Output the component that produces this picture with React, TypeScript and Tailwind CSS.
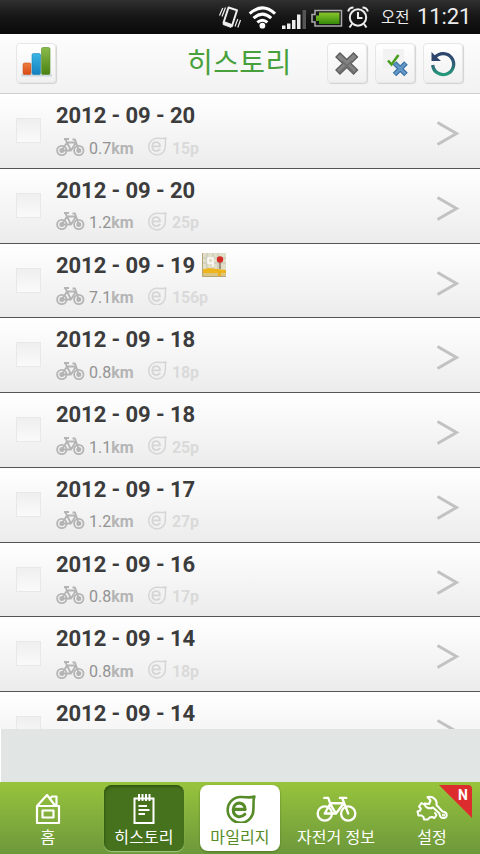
import type { ReactNode } from "react";

const entries = [
  { date: "2012 - 09 - 20", km: "0.7", points: 15 },
  { date: "2012 - 09 - 20", km: "1.2", points: 25 },
  { date: "2012 - 09 - 19", km: "7.1", points: 156, map: true },
  { date: "2012 - 09 - 18", km: "0.8", points: 18 },
  { date: "2012 - 09 - 18", km: "1.1", points: 25 },
  { date: "2012 - 09 - 17", km: "1.2", points: 27 },
  { date: "2012 - 09 - 16", km: "0.8", points: 17 },
  { date: "2012 - 09 - 14", km: "0.8", points: 18 },
  { date: "2012 - 09 - 14" },
];

function StatusBar() {
  return (
    <header className="flex h-[34px] shrink-0 items-center bg-linear-to-b from-[#303030] via-[#161616] via-50% to-[#0a0a0a] pl-[218px] text-[#ececec]">
      <svg width="24" height="34" viewBox="0 0 24 34" fill="none" stroke="#eee">
        <path d="M10.500 7.500 19 10.200 14 26 5.500 22.800Z" strokeWidth="2" strokeLinejoin="round" />
        <path d="M6 21.500 14 24.500 13 27.500 5 24.500Z" fill="#eee" strokeWidth=".8" />
        <path d="M4.800 8 1.500 15.500M7.500 7.500 4 16.500M22.500 20 19.800 27.500M19.800 19 17 26.500" strokeWidth="1.200" />
      </svg>
      <svg className="ml-[6px]" width="28" height="34" viewBox="0 0 28 34" fill="none" stroke="#fff" strokeWidth="3">
        <path d="M1.700 13.700Q14.500 2 27 13.700M5.500 18.200Q14.500 10 23.200 18.200M9.300 22.400Q14.500 18 19.400 22.400" />
        <circle cx="14.400" cy="25.700" r="2.900" fill="#fff" stroke="none" />
      </svg>
      <svg className="ml-[5px]" width="27" height="34" viewBox="0 0 27 34" fill="#eee">
        <path d="M1 25.500h3.500V29H1zM6 23.500h3.500V29H6zM11 20h3.500v9H11zM16 14.500h3.500V29H16z" />
        <path d="M21.500 10H25v19h-3.500z" fill="#555" />
      </svg>
      <svg className="ml-[3px]" width="32" height="34" viewBox="0 0 32 34">
        <defs>
          <linearGradient id="charge" x2="0" y2="1">
            <stop stopColor="#8ac62d" />
            <stop offset="1" stopColor="#348a08" />
          </linearGradient>
        </defs>
        <path d="M4 10.500H30.500V26H4V22H1V14.500H4Z" fill="#171717" stroke="#aaa" strokeWidth="1.500" />
        <path d="M8 12.500H28.500V24H8V21H5V15.500H8Z" fill="url(#charge)" />
      </svg>
      <svg className="ml-1" width="22" height="34" viewBox="0 0 22 34" fill="none" stroke="#eee" strokeWidth="2">
        <circle cx="11" cy="17.500" r="8.200" />
        <path d="M11 12v6h4.500M1.200 11.500Q2 7.500 6.500 7.500M15.500 7.500Q20 7.500 20.800 11.500M5 24l-2.500 3.500M17 24l2.500 3.500" />
      </svg>
      <span className="ml-[12px] w-[36px] pt-0.5 text-[15.500px] leading-[32px] whitespace-nowrap">오전</span>
      <span className="pb-px text-[22px] leading-[32px] tracking-[-0.1px] whitespace-nowrap">11:21</span>
    </header>
  );
}

function ToolButton({ label, children }: { label: string; children: ReactNode }) {
  return (
    <button
      aria-label={label}
      className="flex size-10 shrink-0 items-center justify-center rounded-[4px] border border-[#e6e6e6] bg-linear-to-b from-white to-[#f0f0f0] shadow-[1px_1px_1px_#d2d2d2]"
    >
      {children}
    </button>
  );
}

function TitleBar() {
  return (
    <div className="flex h-[60px] shrink-0 items-center border-b border-[#ccd1cc] bg-linear-to-b from-[#fdfdfd] to-[#f1f2f1] pb-0.5 pl-4">
      <ToolButton label="chart">
        <svg width="40" height="40" viewBox="0 0 40 40" className="shrink-0">
          <defs>
            <linearGradient id="orange" x2="0" y2="1"><stop stopColor="#ee7d40" /><stop offset="1" stopColor="#d94a12" /></linearGradient>
            <linearGradient id="blue" x2="0" y2="1"><stop stopColor="#39b5e4" /><stop offset="1" stopColor="#1680bf" /></linearGradient>
            <linearGradient id="green" x2="0" y2="1"><stop stopColor="#8abb4b" /><stop offset="1" stopColor="#4b8212" /></linearGradient>
          </defs>
          <rect x="5" y="31" width="31" height="2.500" rx="1" fill="#ccd6de" />
          <rect x="7" y="20" width="8" height="11.500" rx="1.500" fill="url(#orange)" stroke="#c95220" strokeWidth=".6" />
          <rect x="16" y="10.500" width="8.500" height="21" rx="1.500" fill="url(#blue)" stroke="#1785b7" strokeWidth=".6" />
          <rect x="25.500" y="4.500" width="8.500" height="27" rx="1.500" fill="url(#green)" stroke="#568d26" strokeWidth=".6" />
        </svg>
      </ToolButton>
      <h1 className="ml-[131px] w-[140px] pt-0.5 text-[28px] leading-[54px] font-normal tracking-[0.4px] whitespace-nowrap text-[#48a03c]">히스토리</h1>
      <div className="flex gap-2">
        <ToolButton label="delete">
          <svg width="40" height="40" viewBox="0 0 40 40" className="shrink-0">
            <path d="M10.500 11.500 29 29.500M29 11.500 10.500 29.500" stroke="#5b5b5b" strokeWidth="7" />
            <path d="M11.500 12.500 28 28.500M28 12.500 11.500 28.500" stroke="#858585" strokeWidth="4.500" />
            <path d="M15 18 26.500 29M25 18 13 29" stroke="#707070" strokeWidth="2" />
          </svg>
        </ToolButton>
        <ToolButton label="select">
          <svg width="40" height="40" viewBox="0 0 40 40" fill="none" className="shrink-0">
            <path d="M8 6h21v20H8z" fill="#f2f2f2" />
            <path d="M13 17.500 16.500 21.500 23.500 12" stroke="#4b9d20" strokeWidth="2.600" />
            <path d="M19.500 20 31 31.500M31 20 19.500 31.500" stroke="#356fa6" strokeWidth="5" />
            <path d="M20 20.500 30.500 31M30.500 20.500 20 31" stroke="#6397c5" strokeWidth="2.500" />
          </svg>
        </ToolButton>
        <ToolButton label="refresh">
          <svg width="40" height="40" viewBox="0 0 40 40" fill="none" className="shrink-0">
            <defs>
              <linearGradient id="turn" x2="0" y2="1"><stop stopColor="#2c456c" /><stop offset=".45" stopColor="#315975" /><stop offset="1" stopColor="#25997c" /></linearGradient>
            </defs>
            <path d="M12 14.500A10.500 10.500 0 1 1 9.700 22" stroke="url(#turn)" strokeWidth="3.300" />
            <path d="M8.500 9V18H18L14 14.500Z" fill="#2d456c" />
          </svg>
        </ToolButton>
      </div>
    </div>
  );
}

function Bike({ className = "", width = 30, stroke = 2 }: { className?: string; width?: number; stroke?: number }) {
  return (
    <svg className={className} width={width} height={width * 0.68} viewBox="0 0 42 28.560" fill="none" stroke="currentColor" strokeWidth={stroke} strokeLinejoin="round" strokeLinecap="round">
      <circle cx="9" cy="19" r="7.300" />
      <circle cx="33" cy="19" r="7.300" />
      <path d="M9 19 14.500 9 20.500 19H9M20.500 19 28.500 8.500H14.500L12.500 3H8.500M33 19 27 3.500M24.500 3H31" />
    </svg>
  );
}

// same bicycle with filled hubs, for the small size in the list
function RowBike() {
  return (
    <svg className="-mt-1 text-[#b4b4b4]" width="29" height="20" viewBox="0 0 29 20" fill="none" stroke="currentColor" strokeWidth="1.800" strokeLinejoin="round">
      <circle cx="5.800" cy="13.500" r="4.700" />
      <circle cx="22.800" cy="13.500" r="4.700" />
      <circle cx="5.800" cy="13.500" r="1.600" fill="currentColor" />
      <circle cx="22.800" cy="13.500" r="1.600" fill="currentColor" />
      <path d="M5.800 13.500 11 5.500 15 13.500H5.800M15 13.500 20 5.500H11L9.500 2.500M8 2H13M22.800 13.500 19 2.500H16.500" />
    </svg>
  );
}

function Leaf({ size, stroke = 2.4 }: { size: number; stroke?: number }) {
  return (
    <svg width={size} height={size * 0.93} viewBox="0 0 30 28" fill="none" stroke="currentColor" strokeWidth={stroke} strokeLinecap="round" strokeLinejoin="round">
      <path d="M28.500 1.500C27 5 28 10 27.500 14A12.500 12.500 0 1 1 14 2C20 1.500 24 3.500 28.500 1.500Z" />
      <path d="M8.500 14H19.500C19.500 5.800 8 5.800 8 14.200C8 22 15.500 22.500 19.200 18.700" strokeWidth={stroke * 1.2} />
    </svg>
  );
}

function MapIcon() {
  return (
    <svg className="ml-[7px]" width="24" height="24" viewBox="0 0 24 24" fill="none">
      <path d="M0 0h24v24H0z" fill="#e2dfc8" />
      <path d="M0 5h24M0 10h24M5 0v16M11 0v16M16 0v16" stroke="#c3c3b7" />
      <path d="M6 5h5v5H6zM11 5v9" stroke="#fff" strokeWidth="1.500" />
      <path d="M0 16.500 7 15 24 17v3H0z" fill="#eeb51e" />
      <path d="M0 20h24v4H0z" fill="#dcc580" />
      <path d="M16 17h3v7h-3z" fill="#e9b21d" />
      <path d="M18 8v8" stroke="#8a7867" strokeWidth="1.500" />
      <circle cx="18" cy="6.500" r="3.200" fill="#d52c25" />
      <path d="M.5 0v23.500H24" stroke="#b5a577" />
    </svg>
  );
}

function HistoryRow({ entry }: { entry: (typeof entries)[number] }) {
  return (
    <li className="flex h-[74.75px] shrink-0 border-b border-[#555] bg-linear-to-b from-white to-[#ececec] pl-4">
      <span className="mt-6 size-[25px] shrink-0 border border-[#e8e8e8] bg-linear-to-b from-[#efefef] to-[#fafafa]" />
      <div className="ml-[15px] flex-1 pt-2">
        <div className="flex h-[27px] items-center text-[22px] font-bold tracking-[-0.08px] whitespace-nowrap text-[#3c3c3c]">
          {entry.date}
          {entry.map && <MapIcon />}
        </div>
        {entry.km && (
          <div className="mt-[7px] flex h-6 items-center pt-px text-[16px] leading-6">
            <RowBike />
            <span className="ml-1 w-[58px] whitespace-nowrap text-[#929292]">
              {entry.km}<b className="text-[#b5b5b5]">km</b>
            </span>
            <span className="-mt-1 text-[#d5d5d5]"><Leaf size={20} stroke={2.2} /></span>
            <b className="ml-[5px] tracking-[-0.2px] text-[#dadada]">{entry.points}p</b>
          </div>
        )}
      </div>
      <svg className="mt-[27px] mr-5" width="24" height="26" viewBox="0 0 24 26" fill="none">
        <path d="M1.500 1.500 20.500 12.500 1.500 23.500" stroke="#c2c2c2" strokeWidth="3" />
      </svg>
    </li>
  );
}

function HomeIcon() {
  return (
    <svg width="26" height="32" viewBox="0 0 26 32" fill="none" stroke="#fff" strokeWidth="2.200">
      <path d="M2 13h22v17H2zM2 13 12 2 20 12.500M15.500 5 17 3.500H21.500V12M7.500 17.500h11v7h-11z" strokeLinejoin="round" />
    </svg>
  );
}

function NotesIcon() {
  return (
    <svg width="24" height="32" viewBox="0 0 24 32" fill="none" stroke="#fff" strokeWidth="2">
      <path d="M2.500 5.500h19v24.500h-19zM7 1v7M10.500 1v7M14 1v7M17.500 1v7M6.500 13H15M6.500 17h11M6.500 21H13" />
    </svg>
  );
}

function SettingsIcon() {
  return (
    <svg width="32" height="28" viewBox="0 0 32 28" fill="none" stroke="#fff" strokeWidth="2" strokeLinejoin="round" strokeLinecap="round">
      <path d="M8 9.500 5.500 8 3 11.500 4.800 13.500 4.200 15.500 1.500 16.500 2.500 20.500 5.500 20.500 7.500 22 8 24.500 12 24.500 13.500 22.500 16 22 18.500 23 20.500 20 19 18" />
      <path d="M11.500 2 14.500 5.500 13 9 8.500 8.500C9 12.500 13 14.500 17 12.500L23.500 18.500C23.500 21 25 23.500 28 23C31.500 22.500 31.500 18 28.500 17L26.500 16.500 20.500 10C21.500 5.500 18 1 11.500 2Z" />
      <circle cx="27.500" cy="20" r=".6" />
    </svg>
  );
}

const tabs = [
  { label: "홈", icon: <HomeIcon /> },
  { label: "히스토리", icon: <NotesIcon />, style: "bg-[#46711d] shadow-[inset_1px_2px_2px_#315a12,0_1px_1px_#a5c781]" },
  { label: "마일리지", icon: <Leaf size={31} stroke={2.5} />, style: "bg-white text-[#568b28] shadow-[0_1px_2px_#527823]" },
  { label: "자전거 정보", icon: <Bike width={41} stroke={2.4} /> },
  { label: "설정", icon: <SettingsIcon />, isNew: true },
];

function TabBar() {
  return (
    <nav className="grid h-[72px] shrink-0 grid-cols-5 bg-linear-to-b from-[#98c43c] to-[#6d983b] text-white">
      {tabs.map(({ label, icon, style = "", isNew }) => (
        <div key={label} className="relative flex justify-center pt-[3px]">
          <div className={`flex h-[66px] w-20 flex-col items-center rounded-[8px] ${style}`}>
            <div className="mt-[7px] flex h-[34px] items-center">{icon}</div>
            <span className="mt-px text-[16px] leading-[21px] tracking-[0.1px] whitespace-nowrap">{label}</span>
          </div>
          {isNew && (
            <div className="absolute top-[3px] right-2 h-[33px] w-[33px] rounded-tr-[4px] bg-[#dc2c2d] [clip-path:polygon(0_0,100%_0,100%_100%)]">
              <b className="absolute top-[2px] right-[4px] text-[14px] leading-4">N</b>
            </div>
          )}
        </div>
      ))}
    </nav>
  );
}

export default function App() {
  return (
    <main className="flex h-[854px] w-[480px] flex-col overflow-hidden bg-white font-[Roboto,'Noto_Sans_CJK_KR',sans-serif]">
      <StatusBar />
      <TitleBar />
      <ul className="flex h-[635px] shrink-0 flex-col overflow-hidden">
        {entries.map((entry, i) => <HistoryRow key={i} entry={entry} />)}
      </ul>
      <div className="h-[53px] shrink-0 border-l border-white bg-[#e1e5e4]" />
      <TabBar />
    </main>
  );
}
